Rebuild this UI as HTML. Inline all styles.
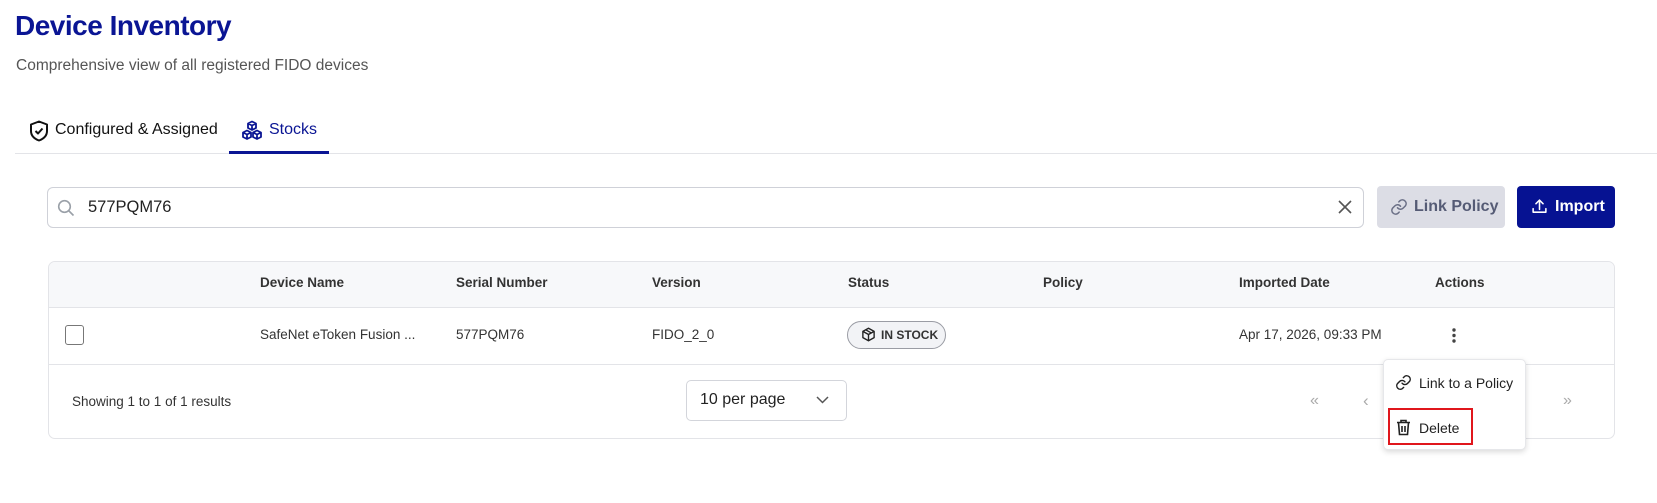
<!DOCTYPE html>
<html><head><meta charset="utf-8"><style>
*{box-sizing:border-box;margin:0;padding:0}
body{width:1657px;height:503px;background:#fff;font-family:"Liberation Sans",Arial,sans-serif;position:relative;overflow:hidden;color:#222}
.a{position:absolute;white-space:nowrap}
.h{font-size:13.5px;font-weight:bold;color:#333;top:275px}
.c{font-size:13.5px;color:#333;top:327px}
</style></head><body>
<div class="a" style="left:15px;top:10px;font-size:28px;font-weight:bold;color:#0a1594;letter-spacing:-0.5px">Device Inventory</div>
<div class="a" style="left:16px;top:57px;font-size:15.5px;color:#555">Comprehensive view of all registered FIDO devices</div>

<svg class="a" style="left:29px;top:120px" width="20" height="22" viewBox="0 0 20 22" fill="none" stroke="#111" stroke-width="2" stroke-linejoin="round"><path d="M10 1.5 L18 4.5 V11 C18 16 14 19 10 20.5 C6 19 2 16 2 11 V4.5 Z"/><path d="M6.5 11 L9 13.5 L13.5 8.5"/></svg>
<div class="a" style="left:55px;top:121px;font-size:16px;color:#111">Configured &amp; Assigned</div>
<svg class="a" style="left:241px;top:120px" width="22" height="22" viewBox="0 0 22 22" fill="none" stroke="#0a1594" stroke-width="1.8" stroke-linejoin="round"><path d="M11 1.5 L15 3.5 V8 L11 10 L7 8 V3.5 Z M7 3.5 L11 5.5 L15 3.5 M11 5.5 V10"/><path d="M6 10.5 L10 12.5 V17 L6 19 L2 17 V12.5 Z M2 12.5 L6 14.5 L10 12.5 M6 14.5 V19"/><path d="M16 10.5 L20 12.5 V17 L16 19 L12 17 V12.5 Z M12 12.5 L16 14.5 L20 12.5 M16 14.5 V19"/></svg>
<div class="a" style="left:269px;top:121px;font-size:16px;color:#0a1594">Stocks</div>
<div class="a" style="left:15px;top:153px;width:1642px;height:1px;background:#e3e4e8"></div>
<div class="a" style="left:229px;top:151px;width:100px;height:2.5px;background:#0a1594"></div>

<div class="a" style="left:47px;top:187px;width:1317px;height:41px;border:1px solid #cfd1d8;border-radius:6px"></div>
<svg class="a" style="left:57px;top:199px" width="18" height="18" viewBox="0 0 18 18" fill="none" stroke="#9aa0a8" stroke-width="1.6"><circle cx="7.5" cy="7.5" r="5.8"/><path d="M12 12 L16.5 16.5"/></svg>
<div class="a" style="left:88px;top:198px;font-size:16.5px;color:#222">577PQM76</div>
<svg class="a" style="left:1338px;top:200px" width="14" height="14" viewBox="0 0 14 14" stroke="#555" stroke-width="1.6"><path d="M1 1 L13 13 M13 1 L1 13"/></svg>

<div class="a" style="left:1377px;top:186px;width:128px;height:42px;background:#dcdde5;border-radius:4px"></div>
<svg class="a" style="left:1390px;top:198px" width="18" height="18" viewBox="0 0 24 24" fill="none" stroke="#6a6f86" stroke-width="2" stroke-linecap="round"><path d="M10 13a5 5 0 0 0 7.5.5l3-3a5 5 0 0 0-7-7l-1.7 1.7"/><path d="M14 11a5 5 0 0 0-7.5-.5l-3 3a5 5 0 0 0 7 7l1.7-1.7"/></svg>
<div class="a" style="left:1414px;top:198px;font-size:16px;font-weight:bold;color:#555b75">Link Policy</div>
<div class="a" style="left:1517px;top:186px;width:98px;height:42px;background:#061292;border-radius:4px"></div>
<svg class="a" style="left:1531px;top:198px" width="17" height="17" viewBox="0 0 24 24" fill="none" stroke="#fff" stroke-width="2.2" stroke-linecap="round" stroke-linejoin="round"><path d="M3 15v5h18v-5"/><path d="M12 16V3M7 8l5-5 5 5"/></svg>
<div class="a" style="left:1555px;top:198px;font-size:16px;font-weight:bold;color:#fff">Import</div>

<div class="a" style="left:48px;top:261px;width:1567px;height:178px;border:1px solid #e3e4e8;border-radius:7px;overflow:hidden">
 <div style="height:46px;background:#f7f8fa;border-bottom:1px solid #e3e4e8"></div>
 <div style="height:57px;border-bottom:1px solid #e3e4e8"></div>
</div>
<div class="a h" style="left:260px">Device Name</div>
<div class="a h" style="left:456px">Serial Number</div>
<div class="a h" style="left:652px">Version</div>
<div class="a h" style="left:848px">Status</div>
<div class="a h" style="left:1043px">Policy</div>
<div class="a h" style="left:1239px">Imported Date</div>
<div class="a h" style="left:1435px">Actions</div>

<div class="a" style="left:65px;top:325px;width:19px;height:20px;border:1.5px solid #777;border-radius:3px"></div>
<div class="a c" style="left:260px">SafeNet eToken Fusion ...</div>
<div class="a c" style="left:456px">577PQM76</div>
<div class="a c" style="left:652px">FIDO_2_0</div>
<div class="a" style="left:847px;top:321px;width:99px;height:28px;border:1px solid #9a9ca4;border-radius:14px;background:#f2f3f6"></div>
<svg class="a" style="left:861px;top:327px" width="15" height="15" viewBox="0 0 24 24" fill="none" stroke="#222" stroke-width="2.2" stroke-linejoin="round"><path d="M12 2l9 5v10l-9 5-9-5V7z"/><path d="M3 7l9 5 9-5M12 12v10M7.5 4.5l9 5"/></svg>
<div class="a" style="left:881px;top:328px;font-size:12px;font-weight:bold;color:#333">IN STOCK</div>
<div class="a c" style="left:1239px">Apr 17, 2026, 09:33 PM</div>
<svg class="a" style="left:1451px;top:327px" width="6" height="17" viewBox="0 0 6 17" fill="#444"><circle cx="3" cy="3" r="1.7"/><circle cx="3" cy="8.5" r="1.7"/><circle cx="3" cy="14" r="1.7"/></svg>

<div class="a" style="left:72px;top:394px;font-size:13.5px;color:#333">Showing 1 to 1 of 1 results</div>
<div class="a" style="left:686px;top:380px;width:161px;height:41px;border:1px solid #d3d5db;border-radius:5px"></div>
<div class="a" style="left:700px;top:391px;font-size:16px;color:#222">10 per page</div>
<svg class="a" style="left:816px;top:396px" width="13" height="8" viewBox="0 0 13 8" fill="none" stroke="#555" stroke-width="1.5"><path d="M1 1l5.5 5.5L12 1"/></svg>
<div class="a" style="left:1310px;top:392px;font-size:16px;color:#aaa">«</div>
<div class="a" style="left:1363px;top:391px;font-size:17px;color:#aaa">‹</div>
<div class="a" style="left:1563px;top:392px;font-size:16px;color:#aaa">»</div>

<div class="a" style="left:1383px;top:359px;width:143px;height:91px;background:#fff;border:1px solid #e6e7ea;border-radius:5px;box-shadow:0 2px 6px rgba(0,0,0,0.15)"></div>
<svg class="a" style="left:1395px;top:374px" width="17" height="17" viewBox="0 0 24 24" fill="none" stroke="#222" stroke-width="2" stroke-linecap="round"><path d="M10 13a5 5 0 0 0 7.5.5l3-3a5 5 0 0 0-7-7l-1.7 1.7"/><path d="M14 11a5 5 0 0 0-7.5-.5l-3 3a5 5 0 0 0 7 7l1.7-1.7"/></svg>
<div class="a" style="left:1419px;top:375px;font-size:14px;color:#222">Link to a Policy</div>
<div class="a" style="left:1388px;top:408px;width:85px;height:37px;border:2.5px solid #e0161c"></div>
<svg class="a" style="left:1396px;top:419px" width="15" height="17" viewBox="0 0 15 17" fill="none" stroke="#222" stroke-width="1.6"><path d="M1 3.5h13M5 3.5V1.5h5v2M2.5 3.5l1 12h8l1-12M6 7v6M9 7v6"/></svg>
<div class="a" style="left:1419px;top:420px;font-size:14px;color:#222">Delete</div>
</body></html>
